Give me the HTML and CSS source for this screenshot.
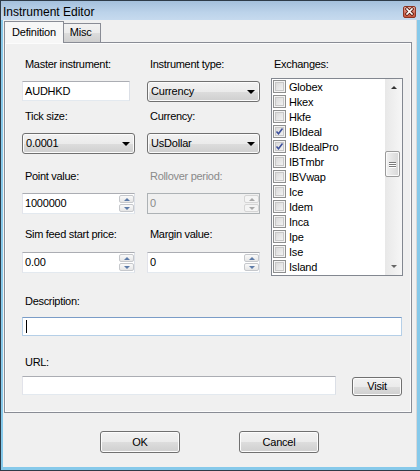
FILE: index.html
```html
<!DOCTYPE html>
<html lang="en">

<head>
    <meta charset="utf-8">
    <title>Instrument Editor</title>
    <link rel="stylesheet" href="styles.css">
</head>

<body>
    <div class="window">
        <div class="titlebar">
            <span class="title">Instrument Editor</span>
            <span class="close">
                <svg width="13" height="12" viewBox="0 0 13 12">
                    <path d="M4 3 L9 8 M9 3 L4 8" stroke="#5a1a10" stroke-width="3.2" stroke-linecap="square"/>
                    <path d="M4 3 L9 8 M9 3 L4 8" stroke="#ffffff" stroke-width="1.6" stroke-linecap="square"/>
                </svg>
            </span>
        </div>

        <div class="client">
            <div class="tabs">
                <div class="tab valgt">Definition</div>
                <div class="tab">Misc</div>
            </div>

            <div class="panel">
                <div class="felter">
                    <div class="felt r1 c1">
                        <div class="lbl">Master instrument:</div>
                        <div class="textbox kort">AUDHKD</div>
                    </div>
                    <div class="felt r1 c2">
                        <div class="lbl">Instrument type:</div>
                        <div class="combo">Currency<span class="pil"></span></div>
                    </div>

                    <div class="felt r2 c1">
                        <div class="lbl">Tick size:</div>
                        <div class="combo">0.0001<span class="pil"></span></div>
                    </div>
                    <div class="felt r2 c2">
                        <div class="lbl">Currency:</div>
                        <div class="combo">UsDollar<span class="pil"></span></div>
                    </div>

                    <div class="felt r3 c1">
                        <div class="lbl">Point value:</div>
                        <div class="spin"><span class="val">1000000</span><span class="knapper"><span class="op"></span><span class="ned"></span></span></div>
                    </div>
                    <div class="felt r3 c2 slukket">
                        <div class="lbl">Rollover period:</div>
                        <div class="spin"><span class="val">0</span><span class="knapper"><span class="op"></span><span class="ned"></span></span></div>
                    </div>

                    <div class="felt r4 c1">
                        <div class="lbl">Sim feed start price:</div>
                        <div class="spin"><span class="val">0.00</span><span class="knapper"><span class="op"></span><span class="ned"></span></span></div>
                    </div>
                    <div class="felt r4 c2">
                        <div class="lbl">Margin value:</div>
                        <div class="spin"><span class="val">0</span><span class="knapper"><span class="op"></span><span class="ned"></span></span></div>
                    </div>

                    <div class="felt c3 exchanges">
                        <div class="lbl">Exchanges:</div>
                        <div class="liste">
                            <div class="items" id="items"></div>
                            <div class="scroll">
                                <span class="sop"></span>
                                <span class="thumb"><i></i><i></i><i></i></span>
                                <span class="sned"></span>
                            </div>
                        </div>
                    </div>
                </div>

                <div class="lbl beskrivelse">Description:</div>
                <div class="textbox bred fokus"><span class="caret"></span></div>

                <div class="lbl url">URL:</div>
                <div class="urlrække">
                    <div class="textbox urlfelt"></div>
                    <div class="knap visit">Visit</div>
                </div>
            </div>

            <div class="bund">
                <div class="knap stor">OK</div>
                <div class="knap stor">Cancel</div>
            </div>
        </div>
    </div>

    <script>
        let exchanges = [
            ["Globex", false], ["Hkex", false], ["Hkfe", false], ["IBIdeal", true],
            ["IBIdealPro", true], ["IBTmbr", false], ["IBVwap", false], ["Ice", false],
            ["Idem", false], ["Inca", false], ["Ipe", false], ["Ise", false], ["Island", false]
        ];

        let dest = document.querySelector("#items");
        exchanges.forEach(ex => {
            let flueben = ex[1] ? `<svg width="11" height="11" viewBox="0 0 11 11"><path d="M2.5 5.5 L4.5 7.8 L8.5 2.5" fill="none" stroke="#3b4f9c" stroke-width="1.5"/></svg>` : "";
            let template = `<div class="item"><span class="check">${flueben}</span><span>${ex[0]}</span></div>`;
            dest.insertAdjacentHTML("beforeend", template);
        });
    </script>
</body>

</html>
```

FILE: styles.css
```css
* {
    box-sizing: border-box;
}

body {
    margin: 0;
    font-family: "Liberation Sans", Arial, sans-serif;
    font-size: 11px;
    color: #000;
}

.window {
    width: 420px;
    height: 471px;
    background: #86c9ea;
    border-top: 1px solid #2e3b48;
    border-left: 1px solid #2e3b48;
    border-bottom: 1px solid #2e3b48;
    overflow: hidden;
}

.titlebar {
    height: 19px;
    margin-left: -1px;
    background: linear-gradient(#a4c0dc, #bcd3ea 60%, #c6daee);
    display: flex;
    justify-content: space-between;
    padding: 3px 4px 0 3px;
}

.title {
    font-size: 12px;
    line-height: 16px;
}

.close {
    width: 13px;
    height: 12px;
    margin-top: 2px;
    border: 1px solid #8c3424;
    border-radius: 2px;
    background: linear-gradient(#eab1a4, #d3705e 55%, #c8583f);
    display: flex;
}

.close svg {
    margin: -1px;
}

.client {
    margin-left: 2px;
    width: 414px;
    height: 447px;
    background: #f0f0f0;
    border-right: 1px solid #d8d8d8;
}

.tabs {
    height: 22px;
    padding-left: 1px;
    display: flex;
    align-items: flex-end;
    position: relative;
    z-index: 1;
}

.tab {
    height: 19px;
    padding: 2px 8px 0 6px;
    border: 1px solid #898c95;
    border-bottom: none;
    border-left: none;
    background: linear-gradient(#f2f2f2, #ebebeb 50%, #dddddd 50%, #cfcfcf);
    letter-spacing: -0.2px;
}

.tab.valgt {
    height: 22px;
    margin-bottom: -1px;
    padding: 4px 7px 0 7px;
    border-left: 1px solid #898c95;
    background: #f7f7f7;
}

.panel {
    margin-left: 1px;
    width: 408px;
    height: 371px;
    border: 1px solid #898c95;
    box-shadow: inset 0 0 0 1px #fcfcfc;
    background: #f0f0f0;
    padding: 15px 0 0 17px;
}

.lbl {
    line-height: 13px;
    letter-spacing: -0.3px;
    padding-left: 3px;
}

.felter {
    display: grid;
    grid-template-columns: 125px 124px 132px;
    grid-template-rows: 52px 60px 58px 48px;
}

.c1 {
    grid-column: 1;
}

.c2 {
    grid-column: 2;
}

.r1 {
    grid-row: 1;
}

.r2 {
    grid-row: 2;
}

.r3 {
    grid-row: 3;
}

.r4 {
    grid-row: 4;
}

.r1 .textbox,
.r1 .combo,
.r2 .combo,
.r3 .spin {
    margin-top: 10px;
}

.r4 .spin {
    margin-top: 11px;
}

.textbox {
    height: 20px;
    background: #fff;
    border: 1px solid;
    border-color: #abadb3 #dbdfe6 #e3e9ef #e2e3ea;
    padding-left: 2px;
    line-height: 18px;
    letter-spacing: -0.2px;
}

.kort {
    width: 108px;
}

.combo {
    position: relative;
    width: 113px;
    height: 21px;
    border: 1px solid #707070;
    border-radius: 3px;
    background: linear-gradient(#f2f2f2, #ebebeb 50%, #dddddd 50%, #cfcfcf);
    box-shadow: inset 0 0 0 1px #fbfbfb;
    padding-left: 3px;
    line-height: 19px;
    letter-spacing: -0.2px;
}

.pil {
    position: absolute;
    right: 4px;
    top: 8px;
    border-left: 4px solid transparent;
    border-right: 4px solid transparent;
    border-top: 4px solid #000;
}

.spin {
    width: 113px;
    height: 21px;
    display: flex;
    background: #fff;
    border: 1px solid;
    border-color: #abadb3 #dbdfe6 #e3e9ef #e2e3ea;
}

.spin .val {
    flex: 1;
    padding-left: 2px;
    line-height: 19px;
    letter-spacing: -0.2px;
}

.knapper {
    width: 15px;
    display: flex;
    flex-direction: column;
    gap: 1px;
    padding: 1px 0;
}

.knapper span {
    flex: 1;
    border: 1px solid #c6c8cc;
    border-radius: 2px;
    background: linear-gradient(#fafafa, #e6e6e6);
    display: flex;
    justify-content: center;
    align-items: center;
}

.knapper .op::after,
.knapper .ned::after {
    content: "";
    border-left: 3px solid transparent;
    border-right: 3px solid transparent;
}

.knapper .op::after {
    border-bottom: 3px solid #5d7ba8;
}

.knapper .ned::after {
    border-top: 3px solid #5d7ba8;
}

.slukket .lbl,
.slukket .val {
    color: #8a8a8a;
}

.slukket .spin {
    background: #f0f0f0;
    border-color: #adb2b5;
}

.slukket .knapper span {
    background: #f4f4f4;
    border-color: #d5d5d5;
}

.slukket .knapper .op::after {
    border-bottom-color: #a8a8a8;
}

.slukket .knapper .ned::after {
    border-top-color: #a8a8a8;
}

.exchanges {
    grid-row: 1 / 5;
}

.liste {
    margin-top: 7px;
    width: 132px;
    height: 198px;
    border: 1px solid #828790;
    background: #fff;
    display: flex;
}

.items {
    flex: 1;
}

.item {
    height: 15px;
    display: flex;
    align-items: center;
    gap: 3px;
    padding-left: 1px;
    letter-spacing: -0.2px;
}

.check {
    width: 13px;
    height: 13px;
    border: 1px solid #8e8f8f;
    background: linear-gradient(135deg, #d4d4d4, #f7f7f7);
    box-shadow: inset 0 0 0 1px #f4f4f4, inset 0 0 0 2px #c8c8c8;
    display: flex;
}

.scroll {
    width: 17px;
    background: linear-gradient(90deg, #e8e8e8, #f6f6f6);
    display: flex;
    flex-direction: column;
    align-items: center;
    position: relative;
}

.sop,
.sned {
    height: 17px;
    width: 17px;
    display: flex;
    justify-content: center;
    align-items: center;
}

.sop::after {
    content: "";
    border-left: 3px solid transparent;
    border-right: 3px solid transparent;
    border-bottom: 3px solid #333;
}

.sned {
    margin-top: auto;
}

.sned::after {
    content: "";
    border-left: 3px solid transparent;
    border-right: 3px solid transparent;
    border-top: 3px solid #666;
}

.thumb {
    position: absolute;
    top: 72px;
    left: 0;
    width: 15px;
    height: 26px;
    border: 1px solid #9b9b9b;
    border-radius: 2px;
    background: linear-gradient(90deg, #f2f2f2, #e4e4e4 50%, #d8d8d8);
    box-shadow: inset 0 0 0 1px #fafafa;
    display: flex;
    flex-direction: column;
    align-items: center;
    justify-content: center;
    gap: 1px;
}

.thumb i {
    width: 7px;
    height: 1px;
    background: #7a7a7a;
    box-shadow: 0 1px 0 #fff;
}

.beskrivelse {
    margin-top: 19px;
}

.bred {
    margin-top: 9px;
    width: 380px;
    height: 19px;
}

.fokus {
    border-color: #7a9cc7 #b5cfe7 #b5cfe7 #b5cfe7;
    display: flex;
    align-items: center;
    padding-left: 3px;
}

.caret {
    width: 1px;
    height: 13px;
    background: #000;
}

.url {
    margin-top: 20px;
}

.urlrække {
    margin-top: 7px;
    display: flex;
    align-items: flex-start;
}

.urlfelt {
    width: 314px;
    height: 19px;
}

.knap {
    border: 1px solid #707070;
    border-radius: 3px;
    background: linear-gradient(#f2f2f2, #ebebeb 50%, #dddddd 50%, #cfcfcf);
    box-shadow: inset 0 0 0 1px #fcfcfc;
    text-align: center;
    letter-spacing: -0.2px;
}

.visit {
    margin: 1px 0 0 16px;
    width: 50px;
    height: 19px;
    line-height: 17px;
}

.bund {
    display: flex;
    justify-content: center;
    gap: 59px;
    padding-top: 18px;
}

.stor {
    width: 80px;
    height: 22px;
    line-height: 20px;
}
```
